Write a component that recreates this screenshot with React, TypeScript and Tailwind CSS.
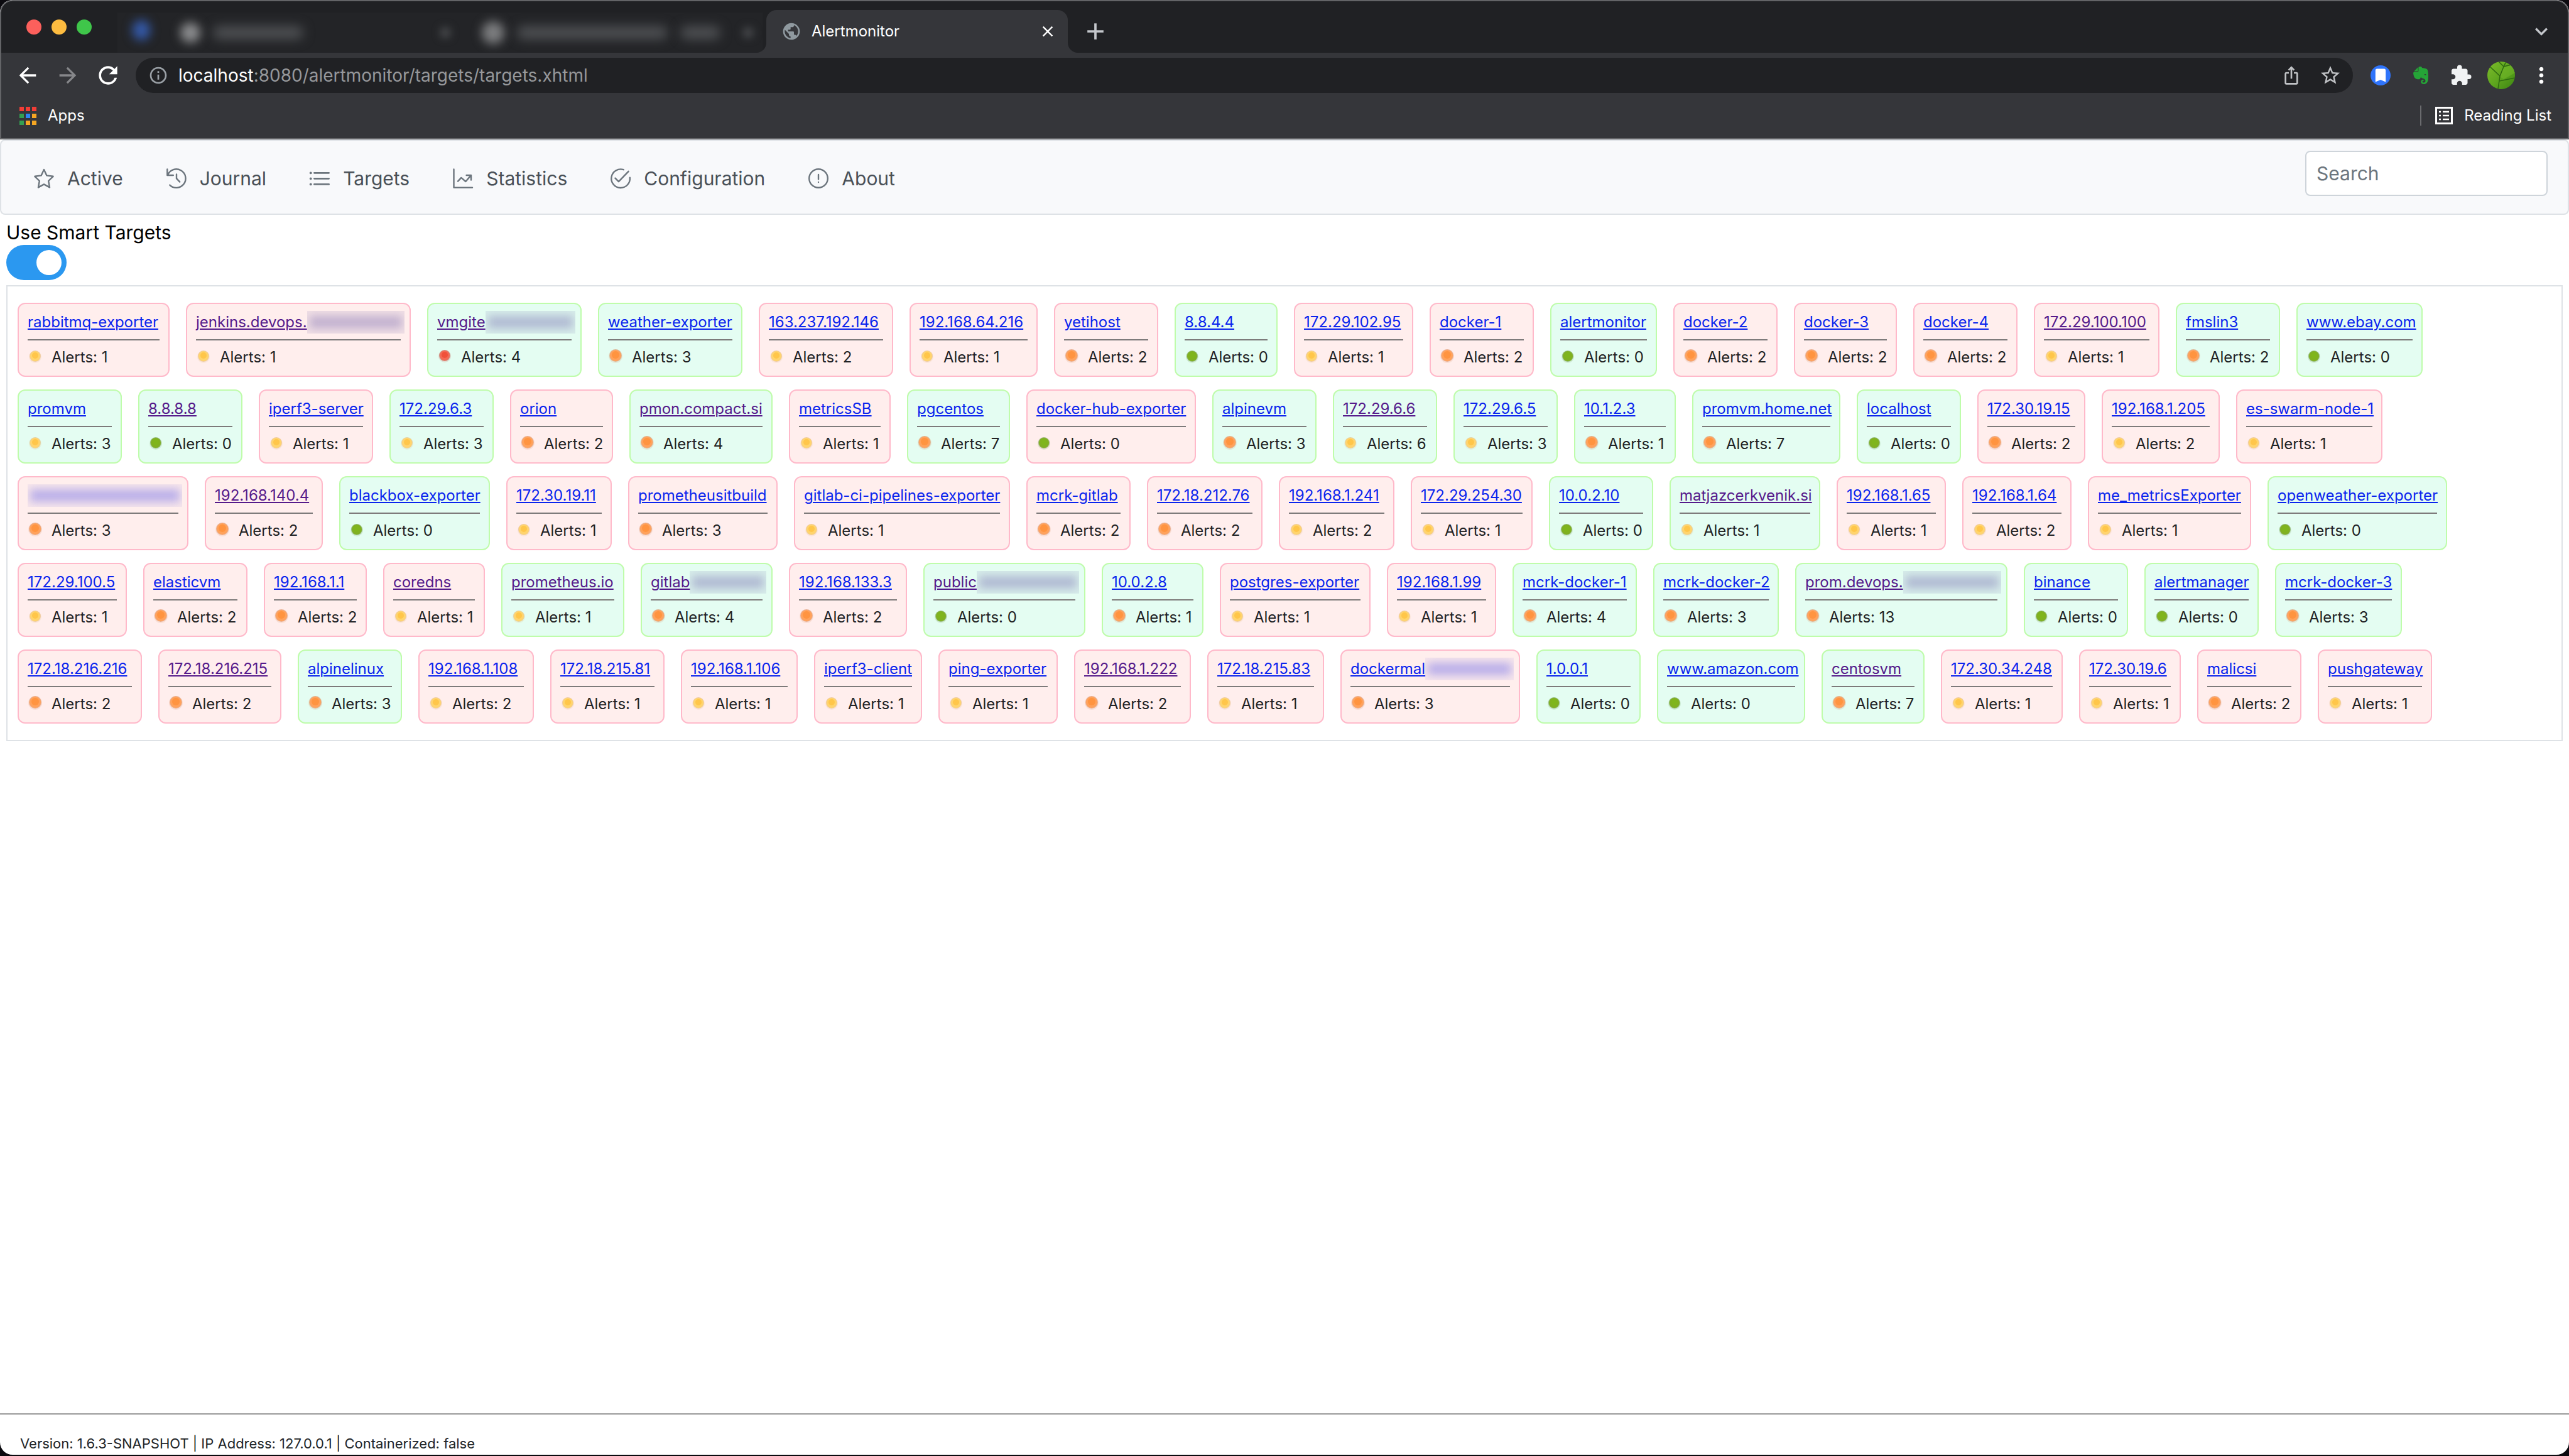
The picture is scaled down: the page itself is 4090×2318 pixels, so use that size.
import type { ReactNode } from 'react';
import {
  MdAdd, MdArrowBack, MdArrowForward, MdBookmark, MdClose, MdExtension, MdInfoOutline,
  MdIosShare, MdKeyboardArrowDown, MdMoreVert, MdPublic, MdRefresh, MdStarBorder,
} from 'react-icons/md';
import { FaEvernote } from 'react-icons/fa';

type Severity = 'clear' | 'warning' | 'major' | 'critical';
type Status = 'up' | 'down';

interface Target {
  name: string;
  minWidth: number;
  alerts: number;
  severity: Severity;
  status: Status;
  visited: boolean;
  redacted: boolean;
}

const SEVERITIES: Record<string, Severity> = { g: 'clear', y: 'warning', o: 'major', r: 'critical' };

/* Flags: severity letter, "+" up or "-" down, "v" visited link, "x" partly redacted name. */
function t(name: string, minWidth: number, alerts: number, flags: string): Target {
  return {
    name,
    minWidth,
    alerts,
    severity: SEVERITIES[flags[0]],
    status: flags[1] === '+' ? 'up' : 'down',
    visited: flags.includes('v'),
    redacted: flags.includes('x'),
  };
}

const ROWS: Target[][] = [
  [
    t('rabbitmq-exporter', 242, 1, 'y-'), t('jenkins.devops.', 358, 1, 'y-vx'), t('vmgite', 246, 4, 'r+vx'),
    t('weather-exporter', 230, 3, 'o+'), t('163.237.192.146', 214, 2, 'y-'), t('192.168.64.216', 204, 1, 'y-'),
    t('yetihost', 166, 2, 'o-'), t('8.8.4.4', 164, 0, 'g+'), t('172.29.102.95', 190, 1, 'y-'),
    t('docker-1', 166, 2, 'o-'), t('alertmonitor', 170, 0, 'g+'), t('docker-2', 166, 2, 'o-'),
    t('docker-3', 164, 2, 'o-'), t('docker-4', 166, 2, 'o-'), t('172.29.100.100', 200, 1, 'y-v'),
    t('fmslin3', 166, 2, 'o+'), t('www.ebay.com', 200, 0, 'g+'),
  ],
  [
    t('promvm', 166, 3, 'y+'), t('8.8.8.8', 166, 0, 'g+v'), t('iperf3-server', 182, 1, 'y-'),
    t('172.29.6.3', 166, 3, 'y+'), t('orion', 164, 2, 'o-'), t('pmon.compact.si', 228, 4, 'o+v'),
    t('metricsSB', 162, 1, 'y-'), t('pgcentos', 164, 7, 'o+'), t('docker-hub-exporter', 270, 0, 'g-'),
    t('alpinevm', 166, 3, 'o+'), t('172.29.6.6', 166, 6, 'y+v'), t('172.29.6.5', 166, 3, 'y+'),
    t('10.1.2.3', 162, 1, 'o+'), t('promvm.home.net', 236, 7, 'o+'), t('localhost', 166, 0, 'g+'),
    t('172.30.19.15', 172, 2, 'o-'), t('192.168.1.205', 188, 2, 'y-'), t('es-swarm-node-1', 233, 1, 'y-'),
  ],
  [
    t('', 272, 3, 'o-x'), t('192.168.140.4', 188, 2, 'o-v'), t('blackbox-exporter', 240, 0, 'g+'),
    t('172.30.19.11', 168, 1, 'y-'), t('prometheusitbuild', 238, 3, 'o-'), t('gitlab-ci-pipelines-exporter', 344, 1, 'y-'),
    t('mcrk-gitlab', 166, 2, 'o-'), t('172.18.212.76', 184, 2, 'o-'), t('192.168.1.241', 184, 2, 'y-'),
    t('172.29.254.30', 194, 1, 'y-'), t('10.0.2.10', 166, 0, 'g+'), t('matjazcerkvenik.si', 240, 1, 'y+v'),
    t('192.168.1.65', 174, 1, 'y-'), t('192.168.1.64', 174, 2, 'y-'), t('me_metricsExporter', 260, 1, 'y-'),
    t('openweather-exporter', 286, 0, 'g+'),
  ],
  [
    t('172.29.100.5', 174, 1, 'y-'), t('elasticvm', 166, 2, 'o-'), t('192.168.1.1', 164, 2, 'o-'),
    t('coredns', 162, 1, 'y-v'), t('prometheus.io', 196, 1, 'y+v'), t('gitlab', 210, 4, 'o+vx'),
    t('192.168.133.3', 188, 2, 'o-'), t('public', 258, 0, 'g+vx'), t('10.0.2.8', 162, 1, 'o+'),
    t('postgres-exporter', 240, 1, 'y-'), t('192.168.1.99', 174, 1, 'y-'), t('mcrk-docker-1', 198, 4, 'o+'),
    t('mcrk-docker-2', 200, 3, 'o+'), t('prom.devops.', 338, 13, 'o+vx'), t('binance', 166, 0, 'g+'),
    t('alertmanager', 182, 0, 'g+'), t('mcrk-docker-3', 202, 3, 'o+'),
  ],
  [
    t('172.18.216.216', 198, 2, 'o-'), t('172.18.216.215', 196, 2, 'o-v'), t('alpinelinux', 166, 3, 'o+'),
    t('192.168.1.108', 184, 2, 'y-'), t('172.18.215.81', 182, 1, 'y-'), t('192.168.1.106', 186, 1, 'y-'),
    t('iperf3-client', 172, 1, 'y-'), t('ping-exporter', 190, 1, 'y-'), t('192.168.1.222', 186, 2, 'o-v'),
    t('172.18.215.83', 186, 1, 'y-'), t('dockermal', 286, 3, 'o-x'), t('1.0.0.1', 166, 0, 'g+'),
    t('www.amazon.com', 236, 0, 'g+'), t('centosvm', 164, 7, 'o+v'), t('172.30.34.248', 194, 1, 'y-'),
    t('172.30.19.6', 162, 1, 'y-'), t('malicsi', 166, 2, 'o-'), t('pushgateway', 182, 1, 'y-'),
  ],
];

const BULLETS: Record<Severity, { core: string; mid: string; rim: string; radius: number; cy: number }> = {
  clear: { core: '#7fb51c', mid: '#80b022', rim: '#5f8f2c', radius: 9, cy: 12 },
  warning: { core: '#ffc64a', mid: '#ffd46e', rim: '#e3b36c', radius: 9, cy: 12 },
  major: { core: '#ff9440', mid: '#ffa25c', rim: '#d98352', radius: 10, cy: 11 },
  critical: { core: '#f0503a', mid: '#f36a55', rim: '#b9473c', radius: 9, cy: 11 },
};

function Bullet({ severity }: { severity: Severity }) {
  const b = BULLETS[severity];
  return (
    <svg viewBox="0 0 24 24" className="-mt-1 size-6 shrink-0 overflow-visible" aria-hidden="true">
      <circle cx="12" cy={b.cy + 1} r={b.radius + 1} fill={b.rim} opacity="0.15" />
      <circle cx="12" cy={b.cy} r={b.radius} fill={b.rim} opacity="0.5" />
      <circle cx="12" cy={b.cy} r={b.radius - 1} fill={b.mid} />
      <circle cx="12" cy={b.cy - 1} r={b.radius - 4} fill={b.core} />
    </svg>
  );
}

function Redaction({ visited }: { visited: boolean }) {
  return (
    <span className={`flex h-9 flex-1 items-center overflow-hidden ${visited ? 'bg-[#6b5fa8]/10' : 'bg-[#5a5ae0]/5'}`}>
      <span className={`mx-1 h-5 flex-1 blur-[7px] ${visited ? 'bg-[#5a4aa0]/30' : 'bg-[#4a4ae8]/35'}`} />
    </span>
  );
}

function TargetCard({ target }: { target: Target }) {
  const tone = target.status === 'up' ? 'border-[#bffcab] bg-[#e4fdf2]' : 'border-[#ffb9ca] bg-[#ffeeed]';
  const link = target.visited ? 'text-[#551a8b]' : 'text-[#0a24ee]';
  return (
    <li className={`rounded-xl border-2 px-3.5 pb-3.5 pt-3 text-2xl ${tone}`} style={{ minWidth: target.minWidth }}>
      <a href="#target" aria-label={target.name || 'redacted target'} className={`-mr-1.5 flex h-[34px] items-center whitespace-nowrap ${link}`}>
        <span className="underline decoration-2 underline-offset-2">{target.name}</span>
        {target.redacted && <Redaction visited={target.visited} />}
      </a>
      <hr className="mt-2.5 border-t-2 border-[#7d7a7a]" />
      <p className="-mr-1.5 mt-3 flex h-[30px] items-center gap-3.5 whitespace-nowrap text-[#212224]">
        <Bullet severity={target.severity} />
        Alerts: {target.alerts}
      </p>
    </li>
  );
}

function NavIcon({ children }: { children: ReactNode }) {
  return (
    <svg viewBox="0 0 32 32" className="size-8 overflow-visible text-[#6c757d]" fill="none" stroke="currentColor" strokeWidth="2.4" strokeLinecap="round" strokeLinejoin="round" aria-hidden="true">
      {children}
    </svg>
  );
}

const NAV: { label: string; icon: ReactNode }[] = [
  {
    label: 'Active',
    icon: <path d="M16 2 L20.4 11.4 L30.6 12.8 L23.2 20 L25 30.4 L16 25.4 L7 30.4 L8.8 20 L1.4 12.8 L11.6 11.4 Z" />,
  },
  {
    label: 'Journal',
    icon: (
      <>
        <path d="M1.3 1.4 V11 H10.8" />
        <path d="M2 10.6 A14.8 14.8 0 1 1 5.3 26.6" />
        <path d="M16 9.4 V16.2 L21.2 21.6" />
      </>
    ),
  },
  {
    label: 'Targets',
    icon: (
      <>
        <path d="M7.4 7.3 H30.6 M7.4 16.3 H30.6 M7.4 25.4 H30.6" strokeWidth="2.8" />
        <path d="M1.6 7.3 h0.2 M1.6 16.3 h0.2 M1.6 25.4 h0.2" strokeWidth="3.8" />
      </>
    ),
  },
  {
    label: 'Statistics',
    icon: (
      <>
        <path d="M1.5 1.4 V30.6 H31" />
        <path d="M8 20.6 L13.3 14.9 L20.4 21 L28.6 11.4" />
        <path d="M21.6 11 H29 V18.6" />
      </>
    ),
  },
  {
    label: 'Configuration',
    icon: (
      <>
        <path d="M20.8 2.2 A14.8 14.8 0 1 0 30.8 14.6" />
        <path d="M7.4 15.6 L12.9 21.2 L28.6 4.8" />
      </>
    ),
  },
  {
    label: 'About',
    icon: (
      <>
        <circle cx="16" cy="16" r="14.8" />
        <path d="M16 10 V17.4 M16 21.9 V22.1" />
      </>
    ),
  },
];

function ToolButton({ label, children }: { label: string; children: ReactNode }) {
  return (
    <button type="button" aria-label={label} className="flex w-16 shrink-0 items-center justify-center">
      {children}
    </button>
  );
}

function LeafAvatar() {
  return (
    <svg viewBox="0 0 44 44" className="size-11" aria-hidden="true">
      <defs>
        <clipPath id="avatar-clip"><circle cx="22" cy="22" r="22" /></clipPath>
        <linearGradient id="leaf" x1="0" y1="0" x2="1" y2="1">
          <stop offset="0" stopColor="#7dbb2a" />
          <stop offset="0.5" stopColor="#5fa61f" />
          <stop offset="1" stopColor="#3c8512" />
        </linearGradient>
      </defs>
      <g clipPath="url(#avatar-clip)">
        <rect width="44" height="44" fill="url(#leaf)" />
        <path d="M24 8 L44 4 V18 L26 28 L20 24 Z" fill="#6fb528" opacity="0.6" />
        <path d="M17 44 L20 23 L26 8 L30 0 M20 23 L4 8 M26 8 L18 0 M26 8 L42 4 M19 31 L44 26" fill="none" stroke="#2f6b10" strokeWidth="1.6" />
      </g>
    </svg>
  );
}

const APP_COLORS = ['bg-[#f23d36]', 'bg-[#f23d36]', 'bg-[#f23d36]', 'bg-[#34a052]', 'bg-[#2e86f5]', 'bg-[#f5a623]', 'bg-[#34a052]', 'bg-[#f5a623]', 'bg-[#f5a623]'];

function BrowserChrome() {
  return (
    <header className="rounded-t-[20px] border-2 border-[#636467] bg-[#35363a] text-white">
      <div className="flex h-[82px] items-end rounded-t-[18px] bg-[#202124]">
        <div className="flex h-full w-[185px] shrink-0 items-center gap-4 pl-10">
          <button type="button" aria-label="Close window" className="size-6 rounded-full bg-[#fc605c]" />
          <button type="button" aria-label="Minimize window" className="size-6 rounded-full bg-[#fdbc40]" />
          <button type="button" aria-label="Zoom window" className="size-6 rounded-full bg-[#3fc64a]" />
        </div>
        <div className="flex h-16 w-[1027px] shrink-0 items-center overflow-hidden bg-[#232427] pl-6" aria-hidden="true">
          <span className="mb-2 h-8 w-7 rounded-full bg-[#3459a8] blur-[8px]" />
          <span className="ml-12 size-8 rounded-full bg-[#8c8d8f] blur-[8px]" />
          <span className="ml-5 h-5 w-36 rounded-full bg-[#505255] blur-[9px]" />
          <span className="ml-[218px] size-4 rounded-full bg-[#505255] blur-[7px]" />
          <span className="ml-[50px] size-9 rounded-full bg-[#7c7d7f] blur-[8px]" />
          <span className="ml-5 h-5 w-60 rounded-full bg-[#505255] blur-[9px]" />
          <span className="ml-5 h-5 w-16 rounded-full bg-[#505255] blur-[9px]" />
          <span className="ml-9 size-4 rounded-full bg-[#505255] blur-[7px]" />
        </div>
        <div className="relative ml-1.5 flex h-[68px] w-[480px] shrink-0 items-center gap-4 rounded-t-2xl bg-[#35363a] pl-6 pr-[18px]">
          <svg viewBox="0 0 16 16" className="absolute bottom-0 right-full size-4 text-[#35363a]" aria-hidden="true"><path d="M16 0 V16 H0 A16 16 0 0 0 16 0 Z" fill="currentColor" /></svg>
          <svg viewBox="0 0 16 16" className="absolute bottom-0 left-full size-4 text-[#35363a]" aria-hidden="true"><path d="M0 0 V16 H16 A16 16 0 0 1 0 0 Z" fill="currentColor" /></svg>
          <MdPublic className="size-8 text-[#8f999f]" />
          <span className="flex-1 text-2xl">Alertmonitor</span>
          <button type="button" aria-label="Close tab"><MdClose className="size-7" /></button>
        </div>
        <button type="button" aria-label="New tab" className="ml-[22px] flex h-[68px] items-center text-[#c4c7cc]"><MdAdd className="size-11" /></button>
        <button type="button" aria-label="Search tabs" className="ml-auto mr-[22px] flex h-[68px] items-center text-[#c4c7cc]"><MdKeyboardArrowDown className="size-10" /></button>
      </div>
      <div className="flex h-[72px] items-center px-2.5">
        <ToolButton label="Back"><MdArrowBack className="size-10" /></ToolButton>
        <ToolButton label="Forward"><MdArrowForward className="size-10 text-[#86878a]" /></ToolButton>
        <ToolButton label="Reload"><MdRefresh className="size-11" /></ToolButton>
        <div className="mx-3 flex h-14 flex-1 items-center rounded-full bg-[#202124] pl-5 pr-[18px]">
          <MdInfoOutline className="size-8 text-[#9aa0a6]" />
          <p className="ml-4 flex-1 text-[28px] text-[#96989b]"><span className="text-white">localhost</span>:8080/alertmonitor/targets/targets.xhtml</p>
          <button type="button" aria-label="Share this page" className="mr-7 text-[#c0c2c5]"><MdIosShare className="size-8" /></button>
          <button type="button" aria-label="Bookmark this tab" className="text-[#c0c2c5]"><MdStarBorder className="size-9" /></button>
        </div>
        <ToolButton label="Bookmarks extension">
          <span className="flex size-8 items-center justify-center rounded-full bg-[#2f74fa]"><MdBookmark className="size-7" /></span>
        </ToolButton>
        <ToolButton label="Evernote Web Clipper"><FaEvernote className="size-8 text-[#25a537]" /></ToolButton>
        <ToolButton label="Extensions"><MdExtension className="size-9 text-[#f1f3f4]" /></ToolButton>
        <ToolButton label="Profile"><LeafAvatar /></ToolButton>
        <ToolButton label="Menu"><MdMoreVert className="size-10" /></ToolButton>
      </div>
      <div className="flex h-16 items-center pb-2 pl-[29px] pr-[26px] text-2xl">
        <button type="button" className="flex items-center gap-[18px]">
          <span className="grid grid-cols-3 gap-x-[3px] gap-y-1">
            {APP_COLORS.map((color, i) => <span key={i} className={`size-[7px] ${color}`} />)}
          </span>
          Apps
        </button>
        <button type="button" className="ml-auto flex h-8 items-center gap-[18px] border-l-2 border-[#6a6b6e] pl-[22px]">
          <svg viewBox="0 0 28 28" className="size-7" fill="none" stroke="currentColor" aria-hidden="true">
            <rect x="1.5" y="1.5" width="25" height="25" strokeWidth="3" />
            <path d="M6 8 H9 M6 14 H9 M6 20 H9 M12 8 H22 M12 14 H22 M12 20 H22" strokeWidth="2.6" />
          </svg>
          Reading List
        </button>
      </div>
    </header>
  );
}

export default function App() {
  return (
    <div className="flex min-h-screen flex-col bg-[#0b0a0f] pb-0.5 font-['Inter',sans-serif]">
      <div className="flex flex-1 flex-col overflow-hidden rounded-[20px] bg-white">
        <BrowserChrome />
        <nav className="flex items-start justify-between rounded-lg border-2 border-[#dee2e6] bg-[#f8f9fb] pb-3 pl-[52px] pr-8 pt-4">
          <ul className="flex h-[88px] items-center gap-[69px] text-3xl text-[#495057]">
            {NAV.map((item) => (
              <li key={item.label}>
                <a href={`#${item.label.toLowerCase()}`} className="flex items-center gap-[21px]">
                  <NavIcon>{item.icon}</NavIcon>
                  {item.label}
                </a>
              </li>
            ))}
          </ul>
          <input type="search" aria-label="Search" placeholder="Search" className="h-[72px] w-[386px] rounded-lg border-2 border-[#ced4da] bg-white px-4 text-3xl placeholder:text-[#6c757d]" />
        </nav>
        <main className="flex-1 px-2.5 pt-2">
          <label className="inline-flex cursor-pointer flex-col text-3xl leading-10 text-black">
            Use Smart Targets
            <input type="checkbox" defaultChecked className="peer sr-only" />
            <span className="flex h-14 w-24 items-center rounded-full bg-[#ccc] p-2 peer-checked:justify-end peer-checked:bg-[#2b98f0]">
              <span className="size-10 rounded-full bg-white" />
            </span>
          </label>
          <section aria-label="Targets" className="mt-2 flex flex-col gap-5 border-2 border-[#dee2e6] py-[26px] pl-4">
            {ROWS.map((row, i) => (
              <ul key={i} className="flex gap-[26px]">
                {row.map((target) => <TargetCard key={target.name} target={target} />)}
              </ul>
            ))}
          </section>
        </main>
        <footer className="border-t-2 border-[#999] pb-1.5 pl-8 pt-[34px] text-[22px] leading-6 text-[#212529]">
          Version: 1.6.3-SNAPSHOT | IP Address: 127.0.0.1 | Containerized: false
        </footer>
      </div>
    </div>
  );
}
